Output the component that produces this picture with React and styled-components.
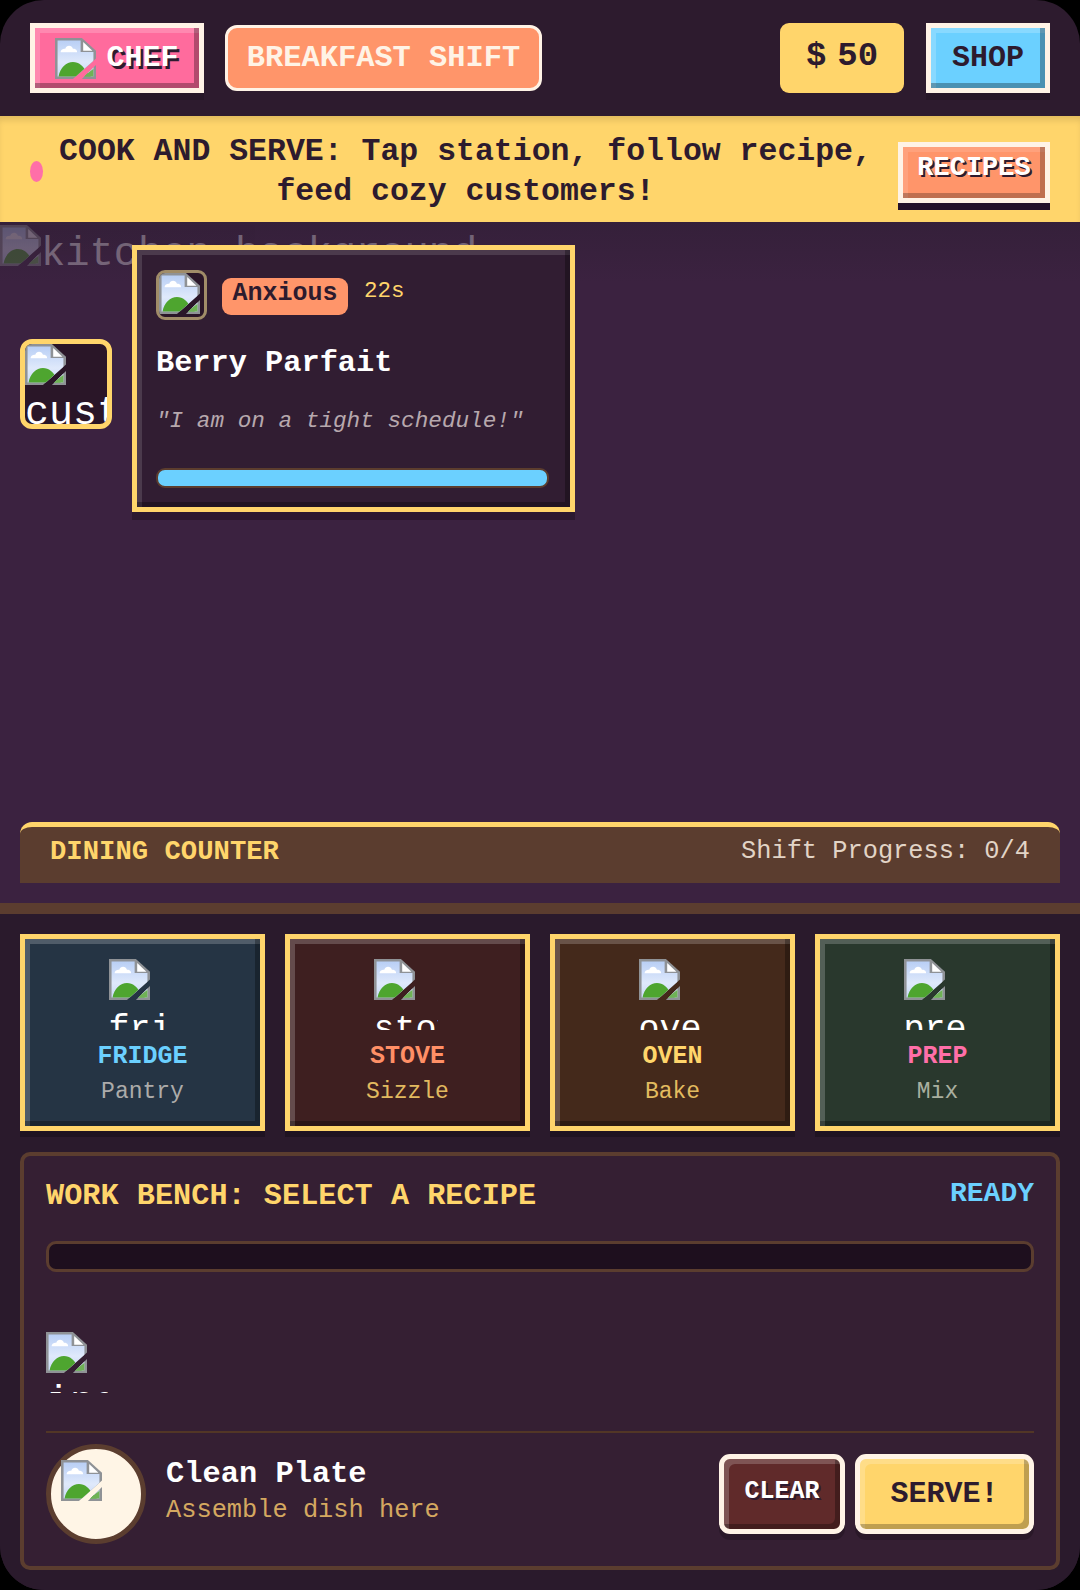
import React, { useId } from "react";
import styled, { createGlobalStyle } from "styled-components";

const GlobalStyle = createGlobalStyle`
    html, body {
        margin: 0;
        background: #000;
    }

    * {
        box-sizing: border-box;
    }
`;

const stations = [
    { id: "fridge", label: "FRIDGE", sub: "Pantry", bg: "#253444", accent: "#6bd0ff", subColor: "#c4c0bc" },
    { id: "stove", label: "STOVE", sub: "Sizzle", bg: "#3e1f20", accent: "#ff8f66", subColor: "#ffd56b" },
    { id: "oven", label: "OVEN", sub: "Bake", bg: "#44291b", accent: "#ffd56b", subColor: "#ffd56b" },
    { id: "prep", label: "PREP", sub: "Mix", bg: "#29382d", accent: "#ff6fa8", subColor: "#c0c4b4" },
];

// Broken picture glyph
const BrokenIcon = () => {
    const clip = useId();

    return (
        <IconSvg viewBox="0 0 16 16" aria-hidden="true">
            <defs>
                <clipPath id={clip}>
                    <polygon points="0,0 16,0 16,8 7,16 0,16" />
                    <polygon points="10.5,16 16,10.5 16,16" />
                </clipPath>
                <linearGradient id={`${clip}sky`} x1="0" y1="0" x2="0" y2="1">
                    <stop offset="0" stopColor="#b9cff5" />
                    <stop offset="0.6" stopColor="#dfe9fb" />
                    <stop offset="1" stopColor="#c9daf6" />
                </linearGradient>
            </defs>
            <g clipPath={`url(#${clip})`}>
                <path d="M0 0H10.5L16 5V16H0Z" fill="#8f9296" />
                <path d="M1 1H10V5.5H15V15H1Z" fill={`url(#${clip}sky)`} />
                <path d="M2.2 5.6C2.2 4.4 3.4 4.1 4 4.2C4.4 2.6 6.6 2.6 7 4.2C8 4.1 8.8 4.8 8.6 5.6Z" fill="#fff" />
                <path d="M1.4 15C2 11.6 4.4 9.4 7 9.4C9.4 9.4 11 11 12 13L14 15Z" fill="#4ea52f" />
                <path d="M11 15L15 12V15Z" fill="#6fb255" />
                <path d="M11 1.6L14.6 5H11Z" fill="#fff" />
            </g>
        </IconSvg>
    );
};

const AltPicture = ({ text, $w, $h, $size, $gap, $textWidth }) => (
    <AltBox $w={$w} $h={$h}>
        <BrokenIcon />
        <AltText $size={$size} $gap={$gap} $textWidth={$textWidth}>
            {text}
        </AltText>
    </AltBox>
);

const App = () => {
    return (
        <>
            <GlobalStyle />
            <Screen>
                <Header>
                    <ChunkyButton $bg="#ff6b9d" $width="174px" $light>
                        <BrokenIcon />
                        CHEF
                    </ChunkyButton>
                    <ShiftPill>BREAKFAST SHIFT</ShiftPill>
                    <Money>
                        <span>$</span>
                        <span>50</span>
                    </Money>
                    <ChunkyButton $bg="#6bd0ff" $width="124px">
                        SHOP
                    </ChunkyButton>
                </Header>

                <Banner>
                    <Dot />
                    <BannerText>
                        COOK AND SERVE: Tap station, follow recipe, feed cozy customers!
                    </BannerText>
                    <RecipesButton>RECIPES</RecipesButton>
                </Banner>

                <Kitchen>
                    <KitchenBackdrop>
                        <BrokenIcon />
                        <span>kitchen background</span>
                    </KitchenBackdrop>

                    <CustomerRow>
                        <Avatar>
                            <AltPicture text="customer" $w="82px" $h="80px" $size="40px" $gap="6px" $textWidth="82px" />
                        </Avatar>
                        <OrderCard>
                            <OrderTop>
                                <Thumb>
                                    <BrokenIcon />
                                </Thumb>
                                <Mood>Anxious</Mood>
                                <Timer>22s</Timer>
                            </OrderTop>
                            <DishName>Berry Parfait</DishName>
                            <Quote>"I am on a tight schedule!"</Quote>
                            <Patience />
                        </OrderCard>
                    </CustomerRow>

                    <Counter>
                        <CounterTitle>DINING COUNTER</CounterTitle>
                        <CounterProgress>Shift Progress: 0/4</CounterProgress>
                    </Counter>
                </Kitchen>

                <Lower>
                    <StationGrid>
                        {stations.map((s) => (
                            <Station key={s.id} $bg={s.bg}>
                                <AltPicture text={s.id} $w="68px" $h="71px" $size="35px" $gap="10px" $textWidth="64px" />
                                <StationLabel $color={s.accent}>{s.label}</StationLabel>
                                <StationSub $color={s.subColor}>{s.sub}</StationSub>
                            </Station>
                        ))}
                    </StationGrid>

                    <Bench>
                        <BenchHead>
                            <BenchTitle>WORK BENCH: SELECT A RECIPE</BenchTitle>
                            <BenchStatus>READY</BenchStatus>
                        </BenchHead>
                        <BenchTrack />
                        <BenchItems>
                            <AltPicture text="ingredient" $w="68px" $h="61px" $size="40px" $gap="8px" $textWidth="62px" />
                        </BenchItems>
                        <BenchFooter>
                            <Plate>
                                <BrokenIcon />
                            </Plate>
                            <PlateInfo>
                                <PlateName>Clean Plate</PlateName>
                                <PlateHint>Assemble dish here</PlateHint>
                            </PlateInfo>
                            <ClearButton>CLEAR</ClearButton>
                            <ServeButton>SERVE!</ServeButton>
                        </BenchFooter>
                    </Bench>
                </Lower>
            </Screen>
        </>
    );
};

const Screen = styled.div`
    width: 1080px;
    height: 1590px;
    display: flex;
    flex-direction: column;
    overflow: hidden;
    border-radius: 44px;
    background: #2d1b2e;
    font-family: "Liberation Mono", monospace;
`;

const IconSvg = styled.svg`
    display: block;
    flex: none;
    width: 41px;
    height: 41px;
`;

const AltBox = styled.div`
    width: ${(p) => p.$w};
    height: ${(p) => p.$h};
    overflow: hidden;
`;

const AltText = styled.div`
    width: ${(p) => p.$textWidth};
    margin-top: ${(p) => p.$gap};
    overflow: hidden;
    font-size: ${(p) => p.$size};
    color: #fff;
    white-space: nowrap;
`;

const Header = styled.header`
    height: 116px;
    flex: none;
    display: flex;
    align-items: flex-start;
    padding: 23px 30px 0;
`;

const ChunkyButton = styled.button`
    width: ${(p) => p.$width};
    height: 70px;
    display: flex;
    align-items: center;
    justify-content: center;
    gap: 10px;
    padding: 0;
    border: 5px solid #fff3e6;
    background: ${(p) => p.$bg};
    color: ${(p) => (p.$light ? "#fff" : "#2d1b2e")};
    font-family: inherit;
    font-size: 30px;
    font-weight: 700;
    text-shadow: ${(p) => (p.$light ? "2.5px 2.5px 0 #2d1b2e" : "none")};
    box-shadow: inset -5px -5px 0 rgba(0, 0, 0, 0.3),
        inset 5px 5px 0 rgba(255, 255, 255, 0.2), 0 7px 0 rgba(0, 0, 0, 0.12);
`;

const ShiftPill = styled.div`
    width: 317px;
    height: 66px;
    margin: 2px 0 0 21px;
    display: flex;
    align-items: center;
    justify-content: center;
    border: 3px solid #fff3e6;
    border-radius: 12px;
    background: #ff956a;
    color: #fff3e6;
    font-size: 30.4px;
    font-weight: 700;
`;

const Money = styled.div`
    width: 124px;
    height: 70px;
    margin: 0 22px 0 auto;
    display: flex;
    align-items: center;
    justify-content: center;
    gap: 11px;
    padding-bottom: 4px;
    border-radius: 9px;
    background: #ffd56b;
    color: #2d1b2e;
    font-size: 34px;
    font-weight: 700;
`;

const Banner = styled.section`
    height: 106px;
    flex: none;
    display: flex;
    align-items: center;
    padding: 0 30px;
    background: #ffd56b;
    box-shadow: inset 0 6px 6px -2px rgba(0, 0, 0, 0.12);
`;

const Dot = styled.span`
    flex: none;
    width: 13px;
    height: 21px;
    border-radius: 50%;
    background: #ff6fa8;
    margin-top: 4px;
`;

const BannerText = styled.p`
    flex: 1;
    margin: 6px 13px 0 3px;
    padding: 0 4px;
    text-align: center;
    color: #2d1b2e;
    font-size: 31.5px;
    font-weight: 700;
    line-height: 40px;
`;

const RecipesButton = styled.button`
    flex: none;
    width: 152px;
    height: 61px;
    margin-top: 7px;
    padding: 0 0 10px;
    border: 5px solid #fff3e6;
    background: #ff956a;
    color: #fff;
    font-family: inherit;
    font-size: 27px;
    font-weight: 700;
    text-shadow: 2px 2px 0 #2d1b2e;
    box-shadow: inset -5px -5px 0 rgba(0, 0, 0, 0.25),
        inset 5px 5px 0 rgba(255, 255, 255, 0.12), 0 7px 0 #24122a;
`;

const Kitchen = styled.main`
    position: relative;
    flex: 1;
    display: flex;
    flex-direction: column;
    padding: 23px 20px 20px;
    background: linear-gradient(#35203a 0, #3b2240 60px);
`;

const KitchenBackdrop = styled.div`
    position: absolute;
    top: 3px;
    left: 0;
    display: flex;
    align-items: flex-start;
    opacity: 0.3;
    color: #fff;
    font-size: 40.4px;
    line-height: 58px;
    white-space: nowrap;
`;

const CustomerRow = styled.div`
    position: relative;
    display: flex;
    align-items: flex-start;
    gap: 20px;
`;

const Avatar = styled.div`
    width: 92px;
    height: 90px;
    margin-top: 94px;
    overflow: hidden;
    border: 5px solid #ffd56b;
    border-radius: 12px;
    background: #2a1628;
`;

const OrderCard = styled.div`
    width: 443px;
    height: 267px;
    padding: 20px 19px 0;
    border: 5px solid #ffd56b;
    background: #311d32;
    box-shadow: inset -5px -5px 0 rgba(0, 0, 0, 0.3),
        inset 5px 5px 0 rgba(255, 255, 255, 0.13), 0 8px 0 rgba(0, 0, 0, 0.25);
`;

const OrderTop = styled.div`
    display: flex;
    align-items: flex-start;
`;

const Thumb = styled.div`
    width: 51px;
    height: 50px;
    overflow: hidden;
    border: 3px solid #a08c68;
    border-radius: 9px;
    background: #2a1628;
`;

const Mood = styled.span`
    width: 126px;
    height: 37px;
    margin: 8px 0 0 15px;
    padding-top: 1px;
    border-radius: 9px;
    background: #ff956a;
    color: #2d1b2e;
    font-size: 25px;
    font-weight: 700;
    text-align: center;
`;

const Timer = styled.span`
    margin: 8px 0 0 16px;
    color: #ffd56b;
    font-size: 22.5px;
`;

const DishName = styled.h3`
    margin: 26px 0 0;
    color: #fff;
    font-size: 30.3px;
    font-weight: 700;
    line-height: 34px;
`;

const Quote = styled.p`
    margin: 28px 0 0;
    color: #b7a8ad;
    font-size: 22.7px;
    font-style: italic;
    line-height: 26px;
`;

const Patience = styled.div`
    width: 393px;
    height: 20px;
    margin-top: 34px;
    border: 2px solid #5c3d2e;
    border-radius: 9px;
    background: #6bd0ff;
`;

const Counter = styled.div`
    margin-top: auto;
    height: 61px;
    display: flex;
    justify-content: space-between;
    align-items: flex-start;
    padding: 9px 30px 0;
    border-top: 5px solid #ffd56b;
    border-radius: 12px 12px 0 0;
    background: #5b3d2f;
`;

const CounterTitle = styled.span`
    color: #ffd56b;
    font-size: 27.25px;
    font-weight: 700;
`;

const CounterProgress = styled.span`
    margin-top: 1px;
    color: #e2d4c6;
    font-size: 25.35px;
    line-height: 30px;
`;

const Lower = styled.section`
    flex: none;
    height: 687px;
    padding: 20px;
    border-top: 11px solid #5b3d2f;
    background: #2a1a2c;
`;

const StationGrid = styled.div`
    display: grid;
    grid-template-columns: repeat(4, 1fr);
    gap: 20px;
`;

const Station = styled.div`
    height: 197px;
    display: flex;
    flex-direction: column;
    align-items: center;
    padding-top: 20px;
    border: 5px solid #ffd56b;
    background: ${(p) => p.$bg};
    box-shadow: inset -5px -5px 0 rgba(0, 0, 0, 0.3),
        inset 5px 5px 0 rgba(255, 255, 255, 0.2), 0 6px 0 rgba(0, 0, 0, 0.25);
`;

const StationLabel = styled.div`
    margin-top: 12px;
    color: ${(p) => p.$color};
    font-size: 25px;
    font-weight: 700;
`;

const StationSub = styled.div`
    margin-top: 8px;
    color: ${(p) => p.$color};
    font-size: 23px;
    opacity: 0.85;
`;

const Bench = styled.div`
    height: 418px;
    margin-top: 21px;
    display: flex;
    flex-direction: column;
    padding: 23px 22px 0;
    border: 4px solid #5b3d2f;
    border-radius: 10px;
    background: #351f33;
`;

const BenchHead = styled.div`
    display: flex;
    justify-content: space-between;
    align-items: flex-start;
`;

const BenchTitle = styled.h2`
    margin: 0;
    color: #ffd56b;
    font-size: 30.25px;
    font-weight: 700;
    line-height: 34px;
`;

const BenchStatus = styled.span`
    color: #6bd0ff;
    font-size: 28px;
    font-weight: 700;
    line-height: 30px;
`;

const BenchTrack = styled.div`
    height: 31px;
    margin-top: 28px;
    border: 3px solid #5b3d2f;
    border-radius: 10px;
    background: #1e0f1e;
`;

const BenchItems = styled.div`
    height: 161px;
    padding-top: 60px;
    border-bottom: 2px solid #523626;
`;

const BenchFooter = styled.div`
    display: flex;
    align-items: center;
    margin-top: 11px;
`;

const Plate = styled.div`
    flex: none;
    width: 100px;
    height: 100px;
    padding: 11px 0 0 10px;
    border: 5px solid #5b3d2f;
    border-radius: 50%;
    background: #fff5e6;
`;

const PlateInfo = styled.div`
    flex: 1;
    margin-left: 20px;
    padding-bottom: 5px;
`;

const PlateName = styled.div`
    color: #fff;
    font-size: 30.4px;
    font-weight: 700;
    line-height: 34px;
`;

const PlateHint = styled.div`
    margin-top: 5px;
    color: #d4a860;
    font-size: 25.35px;
    line-height: 30px;
`;

const ClearButton = styled.button`
    width: 126px;
    height: 80px;
    padding: 0 0 6px;
    border: 5px solid #fff3e6;
    border-radius: 11px;
    background: #602a2a;
    color: #fff;
    font-family: inherit;
    font-size: 25px;
    font-weight: 700;
    text-shadow: 2px 2px 0 #2d1b2e;
    box-shadow: inset -5px -5px 0 rgba(0, 0, 0, 0.3),
        inset 5px 5px 0 rgba(255, 255, 255, 0.2), 0 6px 0 rgba(0, 0, 0, 0.2);
`;

const ServeButton = styled.button`
    width: 179px;
    height: 80px;
    margin-left: 10px;
    padding: 0;
    border: 5px solid #fff3e6;
    border-radius: 11px;
    background: #ffd56b;
    color: #2d1b2e;
    font-family: inherit;
    font-size: 30px;
    font-weight: 700;
    box-shadow: inset -5px -5px 0 rgba(0, 0, 0, 0.25),
        inset 5px 5px 0 rgba(255, 255, 255, 0.2), 0 6px 0 rgba(0, 0, 0, 0.2);
`;

export default App;
